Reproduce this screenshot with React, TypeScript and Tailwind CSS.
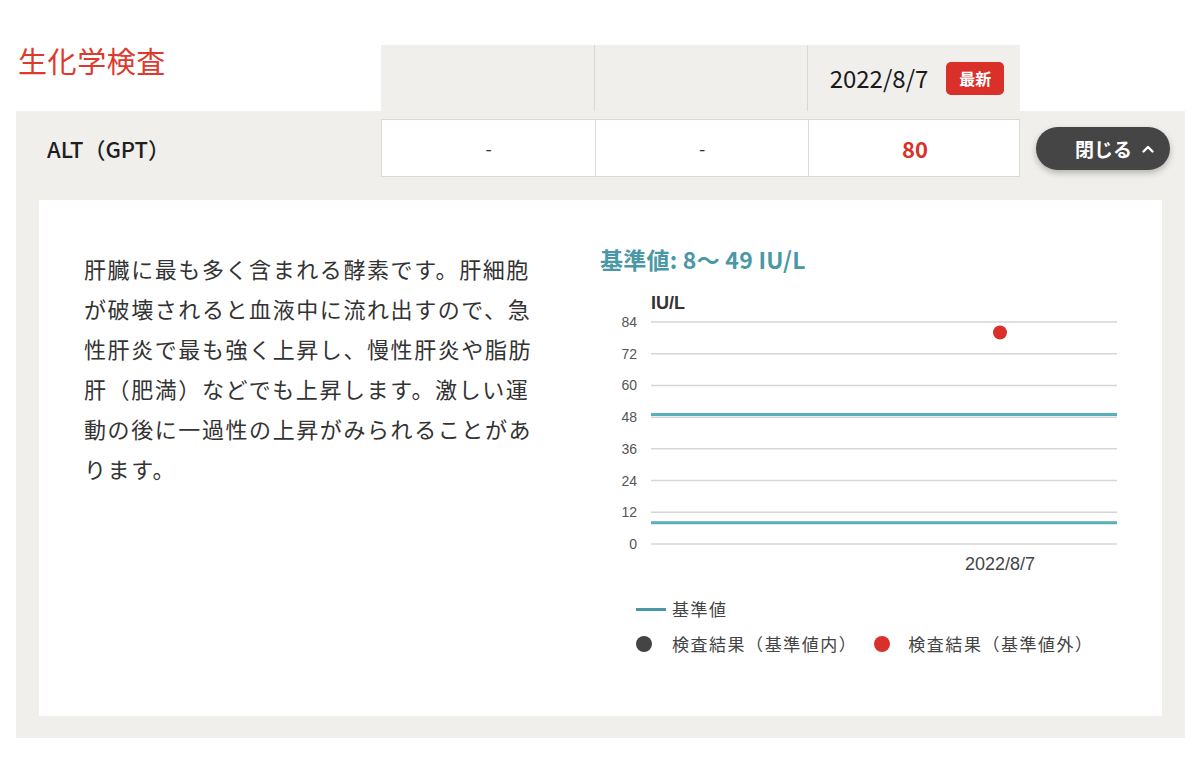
import React from "react";

const JP = { fontFamily: '"Noto Sans CJK JP", "Noto Sans", sans-serif' };

function Chart() {
  const yOf = (v: number) => 264 - v * (222 / 84);
  const ticks = [84, 72, 60, 48, 36, 24, 12, 0];
  return (
    <svg width="530" height="300" viewBox="0 0 530 300" className="block">
      <text x="51" y="29" fontSize="18" fontWeight="700" fill="#333" fontFamily='"Liberation Sans", Arial, sans-serif'>
        IU/L
      </text>
      {ticks.map((t) => (
        <g key={t}>
          <line x1="51" x2="517" y1={yOf(t)} y2={yOf(t)} stroke="#d6d6d6" strokeWidth="1.5" />
          <text
            x="37"
            y={yOf(t) + 5}
            fontSize="14"
            textAnchor="end"
            fill="#555"
            fontFamily='"Liberation Sans", Arial, sans-serif'
          >
            {t}
          </text>
        </g>
      ))}
      <line x1="51" x2="517" y1={yOf(49)} y2={yOf(49)} stroke="#58afb9" strokeWidth="3" />
      <line x1="51" x2="517" y1={yOf(8)} y2={yOf(8)} stroke="#58afb9" strokeWidth="3" />
      <circle cx="400" cy={yOf(80)} r="7" fill="#d9302a" />
      <text
        x="400"
        y="290"
        fontSize="18"
        textAnchor="middle"
        fill="#444"
        fontFamily='"Liberation Sans", Arial, sans-serif'
      >
        2022/8/7
      </text>
    </svg>
  );
}

export default function App() {
  return (
    <div className="w-[1200px] h-[762px] bg-white overflow-hidden" style={JP}>
      {/* top */}
      <div className="flex h-[111px]">
        <div className="w-[381px] pl-[18px] pt-[40px]">
          <h1 className="text-[29px] leading-[40px] text-[#dc3a2c] font-normal tracking-[0.02em]">生化学検査</h1>
        </div>
        <div className="mt-[45px] h-[66px] w-[639px] bg-[#f0efeb] grid grid-cols-[214px_213px_212px]">
          <div className="border-r border-[#dad8d2]" />
          <div className="border-r border-[#dad8d2]" />
          <div className="flex items-center justify-center gap-[18px] pl-[6px]">
            <span className="text-[24px] leading-none text-[#1a1a1a]">2022/8/7</span>
            <span className="w-[58px] h-[33px] rounded-[5px] bg-[#d9302a] text-white text-[16px] font-bold flex items-center justify-center">
              最新
            </span>
          </div>
        </div>
      </div>

      {/* panel */}
      <div className="ml-[16px] w-[1169px] bg-[#f0efeb] pb-[22px]">
        <div className="flex items-start h-[89px] pt-[8px]">
          <div className="w-[365px] h-[58px] flex items-center pl-[31px] text-[22px] font-medium text-[#1e1e1e]">
            ALT（GPT）
          </div>
          <div className="w-[639px] h-[58px] grid grid-cols-[214px_213px_212px] bg-white border border-[#dcdad2] divide-x divide-[#dcdad2]">
            <div className="flex items-center justify-center text-[18px] text-[#333]">-</div>
            <div className="flex items-center justify-center text-[18px] text-[#333]">-</div>
            <div className="flex items-center justify-center text-[22px] font-bold text-[#d9302a]">80</div>
          </div>
          <button className="ml-[16px] mt-[8px] w-[134px] h-[43px] rounded-full bg-[#454545] text-white flex items-center justify-end pr-[16px] gap-[10px] shadow-[0_3px_6px_rgba(0,0,0,0.25)]">
            <span className="text-[19px] font-bold leading-none">閉じる</span>
            <svg width="12" height="8" viewBox="0 0 12 8" fill="none">
              <path d="M1.5 6.5 L6 2 L10.5 6.5" stroke="white" strokeWidth="2.4" strokeLinecap="round" strokeLinejoin="round" />
            </svg>
          </button>
        </div>

        <div className="mx-[23px] h-[516px] bg-white flex">
          <div className="pl-[45px] pt-[48px] w-[561px]">
            <p className="w-[460px] text-[22px] leading-[40px] tracking-[0.072em] text-[#333]">
              肝臓に最も多く含まれる酵素です。肝細胞が破壊されると血液中に流れ出すので、急性肝炎で最も強く上昇し、慢性肝炎や脂肪肝（肥満）などでも上昇します。激しい運動の後に一過性の上昇がみられることがあります。
            </p>
          </div>
          <div className="pt-[45px] flex flex-col">
            <div className="text-[23px] leading-[28px] font-bold text-[#4a97a6] tracking-[0.01em]">基準値: 8〜 49 IU/L</div>
            <div className="mt-[7px]">
              <Chart />
            </div>
            <div className="pl-[36px] mt-[17px] flex flex-col gap-[11px] text-[17px] tracking-[0.09em] text-[#444]">
              <div className="flex items-center h-[24px]">
                <span className="w-[30px] h-[3px] bg-[#4a97a6]" />
                <span className="ml-[6px]">基準値</span>
              </div>
              <div className="flex items-center h-[24px]">
                <span className="w-[16px] h-[16px] rounded-full bg-[#444]" />
                <span className="ml-[20px]">検査結果（基準値内）</span>
                <span className="ml-[17px] w-[16px] h-[16px] rounded-full bg-[#d9302a]" />
                <span className="ml-[18px]">検査結果（基準値外）</span>
              </div>
            </div>
          </div>
        </div>
      </div>
    </div>
  );
}
